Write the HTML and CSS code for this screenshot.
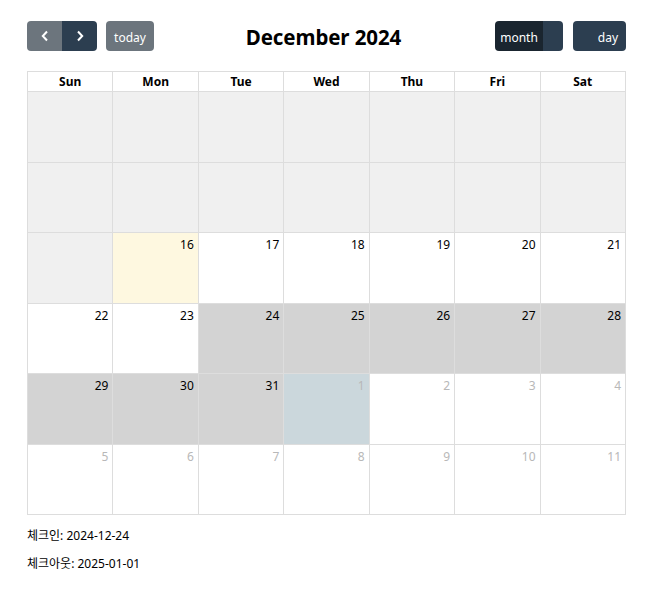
FILE: index.html
```html
<!DOCTYPE html>
<html lang="ko">
<head>
<meta charset="utf-8">
<link rel="stylesheet" href="styles.css">
</head>
<body>
<div class="page">
  <div class="toolbar">
    <div class="left">
      <div class="group">
        <button class="btn nav-prev" aria-label="prev"><svg width="10" height="12" viewBox="0 0 10 12"><path d="M7 1.5 L2.8 6 L7 10.5" fill="none" stroke="#fff" stroke-width="2"/></svg></button>
        <button class="btn nav-next" aria-label="next"><svg width="10" height="12" viewBox="0 0 10 12"><path d="M3 1.5 L7.2 6 L3 10.5" fill="none" stroke="#fff" stroke-width="2"/></svg></button>
      </div>
      <button class="btn today">today</button>
    </div>
    <h2 class="title">December 2024</h2>
    <div class="right">
      <div class="group">
        <button class="btn month">month</button>
        <button class="btn week"></button>
      </div>
      <button class="btn day">day</button>
    </div>
  </div>
  <table class="cal">
    <thead>
      <tr><th>Sun</th><th>Mon</th><th>Tue</th><th>Wed</th><th>Thu</th><th>Fri</th><th>Sat</th></tr>
    </thead>
    <tbody>
      <tr><td class="past"></td><td class="past"></td><td class="past"></td><td class="past"></td><td class="past"></td><td class="past"></td><td class="past"></td></tr>
      <tr><td class="past"></td><td class="past"></td><td class="past"></td><td class="past"></td><td class="past"></td><td class="past"></td><td class="past"></td></tr>
      <tr><td class="past"></td><td class="today-cell"><span>16</span></td><td><span>17</span></td><td><span>18</span></td><td><span>19</span></td><td><span>20</span></td><td><span>21</span></td></tr>
      <tr><td><span>22</span></td><td><span>23</span></td><td class="sel"><span>24</span></td><td class="sel"><span>25</span></td><td class="sel"><span>26</span></td><td class="sel"><span>27</span></td><td class="sel"><span>28</span></td></tr>
      <tr><td class="sel"><span>29</span></td><td class="sel"><span>30</span></td><td class="sel"><span>31</span></td><td class="end other"><span>1</span></td><td class="other"><span>2</span></td><td class="other"><span>3</span></td><td class="other"><span>4</span></td></tr>
      <tr><td class="other"><span>5</span></td><td class="other"><span>6</span></td><td class="other"><span>7</span></td><td class="other"><span>8</span></td><td class="other"><span>9</span></td><td class="other"><span>10</span></td><td class="other"><span>11</span></td></tr>
    </tbody>
  </table>
  <p class="info">체크인: 2024-12-24</p>
  <p class="info">체크아웃: 2025-01-01</p>
</div>
</body>
</html>
```
FILE: styles.css
```css
* { box-sizing: border-box; }
body {
  margin: 0;
  font-family: "Noto Sans", "Noto Sans CJK KR", sans-serif;
  color: #000;
  background: #fff;
}
.page {
  padding: 21px 0 0 27px;
  width: 626px;
}
.toolbar {
  display: flex;
  align-items: center;
  justify-content: space-between;
  height: 30px;
  margin-bottom: 20px;
}
.left, .right {
  display: flex;
  align-items: center;
  gap: 9px;
}
.right { gap: 10px; }
.group { display: flex; }
.btn {
  border: 0;
  height: 30px;
  padding: 2px 0 0 0;
  font-family: inherit;
  font-size: 12px;
  color: #fff;
  border-radius: 4px;
  display: flex;
  align-items: center;
  justify-content: center;
  cursor: pointer;
}
.nav-prev, .nav-next { padding: 0; }
.nav-prev {
  width: 35px;
  background: #6c757d;
  border-radius: 4px 0 0 4px;
}
.nav-next {
  width: 35px;
  background: #2c3e50;
  border-radius: 0 4px 4px 0;
}
.today {
  width: 48px;
  background: #6c757d;
}
.title {
  margin: 0;
  padding-top: 2px;
  font-size: 20.5px;
  font-weight: 700;
  letter-spacing: -0.1px;
  position: relative;
  left: -1px;
}
.month {
  width: 48px;
  background: #1a252f;
  border-radius: 4px 0 0 4px;
}
.week {
  width: 20px;
  background: #2c3e50;
  border-radius: 0 4px 4px 0;
}
.day {
  width: 53px;
  background: #2c3e50;
  justify-content: flex-end;
  padding-right: 8px;
}
.cal {
  width: 599px;
  border-collapse: collapse;
  table-layout: fixed;
}
.cal th, .cal td {
  border: 1px solid #ddd;
  padding: 0;
}
.cal th {
  height: 20px;
  font-size: 12px;
  font-weight: 700;
  text-align: center;
  line-height: 18px;
}
.cal td {
  height: 70.5px;
  vertical-align: top;
  text-align: right;
  font-size: 12px;
}
.cal td span {
  display: block;
  padding: 4px 4px 0 0;
  line-height: 16px;
}
.cal td.past { background: #f0f0f0; }
.cal td.today-cell { background: #fef8e0; }
.cal td.sel { background: #d3d3d3; }
.cal td.end { background: #cbd7dc; }
.cal td.other { color: #b8b8b8; }
.info {
  margin: 13px 0 0 0;
  font-size: 12px;
  line-height: 16px;
}
.info + .info { margin-top: 12px; }
```
